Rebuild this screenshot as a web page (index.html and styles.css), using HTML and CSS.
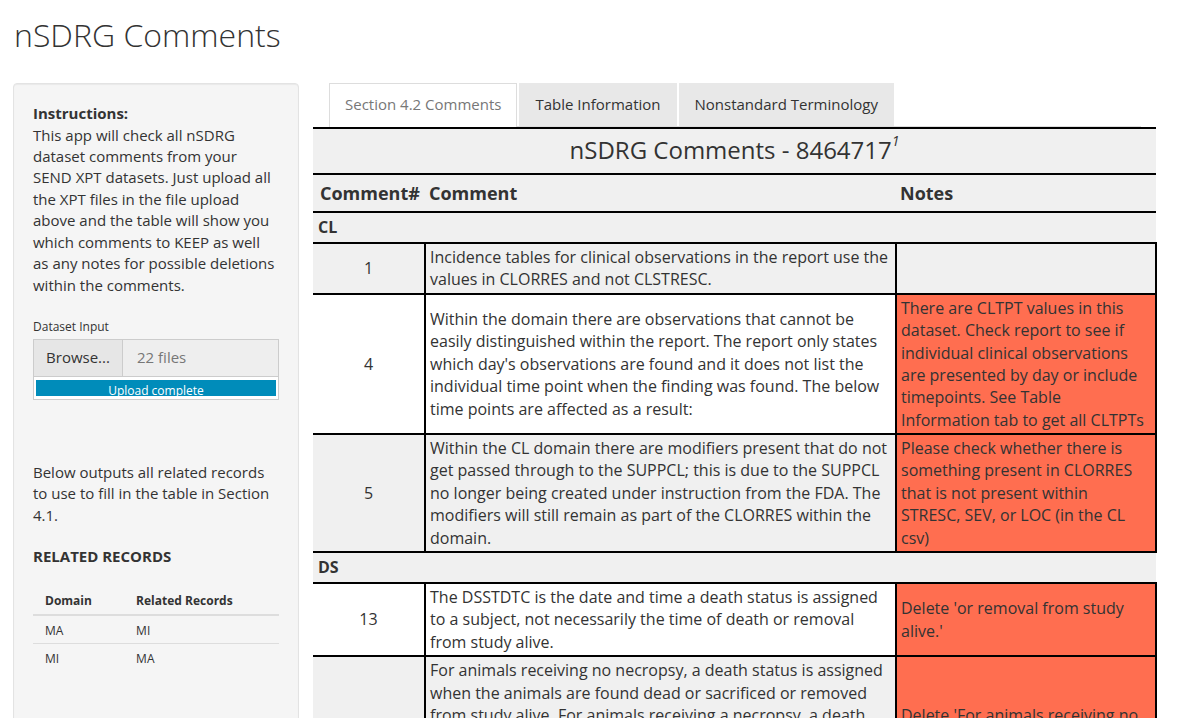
FILE: index.html
```html
<!DOCTYPE html>
<html>
<head>
<meta charset="utf-8">
<link rel="stylesheet" href="styles.css">
</head>
<body>
<div class="page">
  <h2 class="title">nSDRG Comments</h2>
  <div class="layout">
    <aside class="well">
      <p class="intro"><b>Instructions:</b><br>This app will check all nSDRG dataset comments from your SEND XPT datasets. Just upload all the XPT files in the file upload above and the table will show you which comments to KEEP as well as any notes for possible deletions within the comments.</p>
      <label class="label">Dataset Input</label>
      <div class="upload">
        <div class="upload-row">
          <span class="browse">Browse...</span>
          <span class="files">22 files</span>
        </div>
        <div class="progress"><div class="bar">Upload complete</div></div>
      </div>
      <p class="below">Below outputs all related records to use to fill in the table in Section 4.1.</p>
      <h5 class="related">RELATED RECORDS</h5>
      <table class="mini">
        <thead><tr><th>Domain</th><th>Related Records</th></tr></thead>
        <tbody>
          <tr><td>MA</td><td>MI</td></tr>
          <tr><td>MI</td><td>MA</td></tr>
        </tbody>
      </table>
    </aside>
    <main class="main">
      <ul class="tabs">
        <li class="tab active">Section 4.2 Comments</li>
        <li class="tab">Table Information</li>
        <li class="tab">Nonstandard Terminology</li>
      </ul>
      <table class="comments">
        <colgroup><col class="c1"><col class="c2"><col class="c3"></colgroup>
        <thead>
          <tr class="caption"><th colspan="3">nSDRG Comments - 8464717<sup>1</sup></th></tr>
          <tr class="head"><th class="first">Comment#</th><th>Comment</th><th>Notes</th></tr>
        </thead>
        <tbody>
          <tr class="group"><td colspan="3">CL</td></tr>
          <tr class="row odd">
            <td class="num">1</td>
            <td>Incidence tables for clinical observations in the report use the values in CLORRES and not CLSTRESC.</td>
            <td></td>
          </tr>
          <tr class="row even">
            <td class="num">4</td>
            <td>Within the domain there are observations that cannot be easily distinguished within the report. The report only states which day's observations are found and it does not list the individual time point when the finding was found. The below time points are affected as a result:</td>
            <td class="note">There are CLTPT values in this dataset. Check report to see if individual clinical observations are presented by day or include timepoints. See Table Information tab to get all CLTPTs</td>
          </tr>
          <tr class="row odd">
            <td class="num">5</td>
            <td>Within the CL domain there are modifiers present that do not get passed through to the SUPPCL; this is due to the SUPPCL no longer being created under instruction from the FDA. The modifiers will still remain as part of the CLORRES within the domain.</td>
            <td class="note">Please check whether there is something present in CLORRES that is not present within STRESC, SEV, or LOC (in the CL csv)</td>
          </tr>
          <tr class="group"><td colspan="3">DS</td></tr>
          <tr class="row even">
            <td class="num">13</td>
            <td>The DSSTDTC is the date and time a death status is assigned to a subject, not necessarily the time of death or removal from study alive.</td>
            <td class="note">Delete 'or removal from study alive.'</td>
          </tr>
          <tr class="row odd">
            <td class="num">14</td>
            <td>For animals receiving no necropsy, a death status is assigned when the animals are found dead or sacrificed or removed from study alive. For animals receiving a necropsy, a death status is assigned at the time of necropsy. Therefore the DSSTDTC may not reflect the actual date of death for animals that were found dead or sacrificed in extremis prior to necropsy.</td>
            <td class="note">Delete 'For animals receiving no necropsy' sentence if no animals were removed from study alive.</td>
          </tr>
        </tbody>
      </table>
    </main>
  </div>
</div>
</body>
</html>
```

FILE: styles.css
```css
* { box-sizing: border-box; }
html, body { margin: 0; padding: 0; background: #fff; }
body {
  font-family: "Open Sans", "DejaVu Sans", sans-serif;
  font-size: 15px;
  line-height: 1.428571;
  color: #333;
  overflow: hidden;
}
.page { padding: 0 13px; }
.title {
  font-size: 32px;
  font-weight: 300;
  line-height: 1.1;
  margin: 17px 0 31px 1px;
  color: #333;
}
.layout { display: flex; align-items: flex-start; gap: 14px; }
.well {
  width: 286px;
  flex: none;
  background: #f5f5f5;
  border: 1px solid #e3e3e3;
  border-radius: 4px;
  padding: 19px 19px 80px;
  box-shadow: inset 0 1px 1px rgba(0,0,0,.05);
  min-height: 700px;
}
.intro { margin: 0 0 22px; }
.label { display: block; font-size: 12px; line-height: 17px; margin-bottom: 4px; }
.upload { border: 1px solid #ccc; width: 246px; }
.upload-row { display: flex; height: 37px; border-bottom: 1px solid #ccc; }
.browse {
  width: 89px; background: #e6e6e6; border-right: 1px solid #ccc;
  display: flex; align-items: center; justify-content: center; color: #333;
}
.files { flex: 1; background: #eee; display: flex; align-items: center; padding-left: 14px; color: #777; }
.progress { padding: 3px 2px 2px; height: 22px; background: #fff; }
.bar {
  background: #008cba; color: #fff; height: 16px; font-size: 12px;
  line-height: 21px; text-align: center; overflow: hidden;
}
.below { margin: 62px 0 20px; }
.related { font-size: 15px; font-weight: 700; margin: 0 0 19px; line-height: 21px; }
.mini { width: 100%; border-collapse: collapse; font-size: 12px; }
.mini th { text-align: left; font-weight: 700; padding: 6px 12px 5px; border-bottom: 2px solid #ddd; line-height: 17px; }
.mini td { padding: 6px 12px 4px; line-height: 17px; }
.mini tbody tr + tr td { border-top: 1px solid #ddd; }
.main { width: 843px; flex: none; }
.tabs {
  list-style: none; margin: 0 15px 0 16px; padding: 0; display: flex;
  border-bottom: 1px solid #ddd; height: 44px;
}
.tab {
  padding: 10px 15px; margin-right: 2px; background: #e8e8e8; color: #333;
  border: 1px solid #e8e8e8; border-bottom: none; height: 43px; line-height: 21px;
}
.tab.active { background: #fff; border-color: #ddd; color: #777; height: 44px; }
.comments {
  width: 843px; table-layout: fixed; border-collapse: collapse;
  font-size: 16px; line-height: 1.4; color: #333;
}
.c1 { width: 112px; } .c2 { width: 471px; } .c3 { width: 260px; }
.caption th {
  background: #f0f0f0; font-size: 24px; font-weight: 400; padding: 4px 5px 6px;
  border-top: 2px solid #000; border-bottom: 2px solid #000; line-height: 1.4;
}
.caption sup { font-size: 14px; font-style: italic; vertical-align: top; position: relative; top: -2px; }
.head th {
  background: #f0f0f0; font-size: 18px; font-weight: 700; text-align: left;
  padding: 6px 4px 5px; border-bottom: 2px solid #000;
}
.head th.first { padding-left: 7px; }
.group td { background: #f0f0f0; font-weight: 700; padding: 3px 5px; line-height: 23px; }
.row td {
  padding: 2px 4px; border: 2px solid #000; vertical-align: middle;
}
.row td:first-child { border-left: none; }
.row.odd td { background: #f0f0f0; }
.row.even td { background: #fff; }
.row td.num { text-align: center; }
.row td.note { background: #ff6e50; }
```
